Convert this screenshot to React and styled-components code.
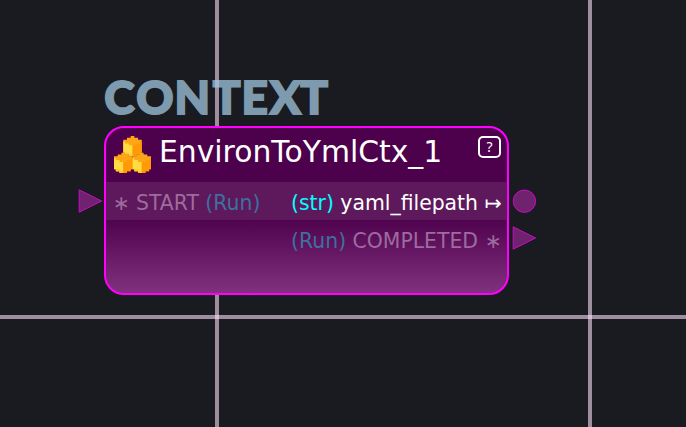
import React from 'react';
import styled, { createGlobalStyle } from 'styled-components';

const GlobalStyle = createGlobalStyle`
  body { margin: 0; background: #1a1b20; overflow: hidden; }
`;

const Canvas = styled.main`
  position: relative;
  width: 686px;
  height: 427px;
  overflow: hidden;
  background: #1a1b20;
  font-family: "DejaVu Sans", sans-serif;
`;

const GridLine = styled.div`
  position: absolute;
  background: rgba(255, 225, 250, 0.58);
  ${({ $vertical, $at }) => $vertical
    ? `left: ${$at}px; top: 0; width: 4px; height: 100%;`
    : `top: ${$at}px; left: 0; height: 4px; width: 100%;`}
`;

const Category = styled.svg`
  position: absolute;
  left: 100px;
  top: 70px;
  overflow: visible;
  opacity: 0.75;
  text {
    font-family: Lato, sans-serif;
    font-weight: 900;
    font-size: 46px;
    fill: #9fc5de;
    stroke: #9fc5de;
    stroke-width: 1.9px;
  }
`;

const Node = styled.section`
  position: absolute;
  left: 104px;
  top: 126px;
  box-sizing: border-box;
  width: 405px;
  height: 169px;
  border: 2px solid #ff00ff;
  border-radius: 20px;
  overflow: hidden;
  background: linear-gradient(#4d004b 0 88px, #823380 167px);
`;

const Header = styled.header`
  display: flex;
  height: 54px;
  padding: 0 6px 0 8px;
`;

const Title = styled.h1`
  flex: 1;
  margin: 6px 0 0 8px;
  font-size: 29.8px;
  line-height: 36px;
  font-weight: 400;
  color: #fff;
  white-space: nowrap;
`;

const NodeIcon = styled.svg`
  flex: none;
  width: 37px;
  height: 37px;
  margin-top: 8px;
`;

const Help = styled.button`
  box-sizing: border-box;
  width: 23px;
  height: 22px;
  margin-top: 8px;
  padding: 0;
  border: 2px solid #fff;
  border-radius: 5px;
  background: transparent;
  color: #fff;
  font: 14px/18px "Noto Sans", sans-serif;
`;

const Row = styled.div`
  display: flex;
  justify-content: space-between;
  height: 38px;
  padding: 0 5.4px 0 6.4px;
  font-size: 20.4px;
  line-height: 42px;
  white-space: pre;
  background: ${({ $active }) => ($active ? '#5d195b' : 'transparent')};
`;

const Port = styled.span`
  color: ${({ $dim }) => ($dim ? '#9d6b9e' : '#fff')};
`;

const PortType = styled.span`
  color: ${({ $dim }) => ($dim ? '#3e709d' : '#00ffff')};
`;

const Socket = styled.svg`
  position: absolute;
  left: ${({ $x }) => $x}px;
  top: ${({ $y }) => $y}px;
  width: 24px;
  height: 24px;
  fill: #70226f;
  stroke: #c80bc8;
  stroke-width: 1px;
`;

// Stepped outlines keep the pixel-art edges without seams between cells.
function Cube({ x, y }) {
  return (
    <g transform={`translate(${x} ${y})`}>
      <path fill="#ffa616" d="M4 0H6V1H8V2H10V9H9V10H7V11H3V10H1V9H0V2H2V1H4Z" />
      <path fill="#ffdd40" d="M0 3H1V4H3V5H5V11H3V10H1V9H0Z" />
      <path fill="#ff9a06" d="M10 3H9V4H7V5H5V11H7V10H9V9H10Z" />
      <path fill="#ffc42d" d="M1 9H3V10H5V11H3V10H1Z" />
    </g>
  );
}

function ArrowSocket({ x, y }) {
  return <Socket $x={x} $y={y}><path d="M1.2 .8V23.2L23.6 12Z" /></Socket>;
}

export default function App() {
  return (
    <>
      <GlobalStyle />
      <Canvas>
        <GridLine $vertical $at={215} />
        <GridLine $vertical $at={588} />
        <GridLine $at={315} />
        <Category width="240" height="50">
          <text x="4.2 36.3 74.6 112.8 141.4 169.8 200.2" y="44">CONTEXT</text>
        </Category>
        <Node>
          <Header>
            <NodeIcon viewBox="0 0 20 20">
              <Cube x={5} y={0} />
              <Cube x={0} y={9} />
              <Cube x={10} y={9} />
            </NodeIcon>
            <Title>EnvironToYmlCtx_1</Title>
            <Help>?</Help>
          </Header>
          <Row $active>
            <Port $dim>∗ START <PortType $dim>(Run)</PortType></Port>
            <Port><PortType>(str)</PortType> yaml_filepath ↦</Port>
          </Row>
          <Row>
            <span />
            <Port $dim><PortType $dim>(Run)</PortType> COMPLETED ∗</Port>
          </Row>
        </Node>
        <ArrowSocket x={78} y={189} />
        <Socket $x={512} $y={189}><circle cx="12.4" cy="12.2" r="11.2" /></Socket>
        <ArrowSocket x={512} y={226} />
      </Canvas>
    </>
  );
}
